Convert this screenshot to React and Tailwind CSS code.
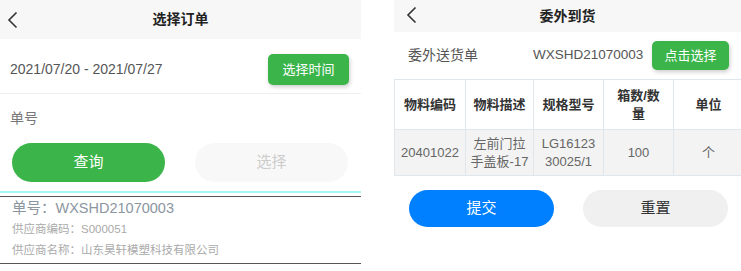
import React from "react";

const font = { fontFamily: '"Liberation Sans", "Noto Sans CJK SC", sans-serif' };

function Back({ className }) {
  return (
    <svg className={className} width="11" height="18" viewBox="0 0 11 18" fill="none">
      <polyline points="9.5,1.5 2,9 9.5,16.5" stroke="#333" strokeWidth="1.6" strokeLinejoin="miter" />
    </svg>
  );
}

function OrderPicker() {
  return (
    <div className="w-[361px] shrink-0 bg-white">
      <div className="relative flex h-[39px] items-center justify-center bg-[#f7f7f7]">
        <Back className="absolute left-[7px] top-[11px]" />
        <span className="text-[14px] font-bold text-[#222]">选择订单</span>
      </div>

      <div className="flex items-center justify-between border-b border-[#eeeeee] pl-[10px] pr-[12px] pt-[15px] pb-[8px]">
        <span className="text-[14px] text-[#555]">2021/07/20 - 2021/07/27</span>
        <button
          type="button"
          className="h-[31px] w-[81px] rounded-[5px] bg-[#3bb54a] text-[13px] text-white shadow-[1px_2px_4px_rgba(0,0,0,0.2)]"
        >
          选择时间
        </button>
      </div>

      <div className="pl-[10px] pt-[14px] text-[14px] leading-[20px] text-[#777]">单号</div>

      <div className="mt-[15px] flex gap-[30px] px-[12px]">
        <button type="button" className="h-[39px] w-[153px] rounded-full bg-[#3bb54a] text-[15px] text-white">
          查询
        </button>
        <button type="button" className="h-[39px] w-[153px] rounded-full bg-[#f8f8f8] text-[15px] text-[#cccccc]">
          选择
        </button>
      </div>

      <div className="mt-[9px] h-[2px] bg-[#a8f6f6]" />

      <div className="mt-[3px] border-y border-[#555] pl-[12px] pb-[2px]">
        <div className="text-[14.5px] leading-[22px] text-[#8c96a0]">单号：WXSHD21070003</div>
        <div className="text-[11.5px] leading-[21px] text-[#aaaaaa]">供应商编码：S000051</div>
        <div className="text-[11.5px] leading-[21px] text-[#aaaaaa]">供应商名称：山东昊轩模塑科技有限公司</div>
      </div>
    </div>
  );
}

const cols = [
  { w: "w-[71px]", head: ["物料编码"], cell: ["20401022"] },
  { w: "w-[68px]", head: ["物料描述"], cell: ["左前门拉", "手盖板-17"] },
  { w: "w-[70px]", head: ["规格型号"], cell: ["LG16123", "30025/1"] },
  { w: "w-[70px]", head: ["箱数/数", "量"], cell: ["100"] },
  { w: "w-[70px]", head: ["单位"], cell: ["个"] },
];

function Lines({ parts }) {
  return parts.map((p, i) => (
    <span key={i} className="block">
      {p}
    </span>
  ));
}

function Arrival() {
  return (
    <div className="w-[347px] shrink-0 overflow-hidden bg-white">
      <div className="relative flex h-[32px] items-center justify-center bg-[#f7f7f7]">
        <Back className="absolute left-[12px] top-[6px]" />
        <span className="text-[14px] font-bold text-[#222]">委外到货</span>
      </div>

      <div className="flex items-center py-[9px] pl-[14px]">
        <span className="w-[125px] text-[14px] text-[#555]">委外送货单</span>
        <span className="w-[119px] text-[13.5px] text-[#555]">WXSHD21070003</span>
        <button
          type="button"
          className="h-[29px] w-[77px] rounded-[5px] bg-[#3bb54a] text-[13px] text-white shadow-[1px_2px_4px_rgba(0,0,0,0.2)]"
        >
          点击选择
        </button>
      </div>

      <table className="w-[349px] table-fixed border-collapse text-center text-[13px]">
        <thead>
          <tr className="h-[50px]">
            {cols.map((c) => (
              <th key={c.head[0]} className={`${c.w} border border-[#dfe6ec] px-[3px] font-bold leading-[18px] text-[#333]`}>
                <Lines parts={c.head} />
              </th>
            ))}
          </tr>
        </thead>
        <tbody>
          <tr className="h-[46px] bg-[#f3f3f3]">
            {cols.map((c) => (
              <td key={c.head[0]} className="border border-[#dfe6ec] px-[3px] leading-[18px] text-[#666]">
                <Lines parts={c.cell} />
              </td>
            ))}
          </tr>
        </tbody>
      </table>

      <div className="mt-[14px] flex gap-[29px] pl-[15px]">
        <button type="button" className="h-[37px] w-[145px] rounded-full bg-[#0080ff] text-[15px] text-white">
          提交
        </button>
        <button type="button" className="h-[37px] w-[145px] rounded-full bg-[#f0f0f0] text-[15px] text-[#333]">
          重置
        </button>
      </div>
    </div>
  );
}

export default function App() {
  return (
    <div className="flex h-[271px] w-[741px] gap-[33px] overflow-hidden bg-white" style={font}>
      <OrderPicker />
      <Arrival />
    </div>
  );
}
